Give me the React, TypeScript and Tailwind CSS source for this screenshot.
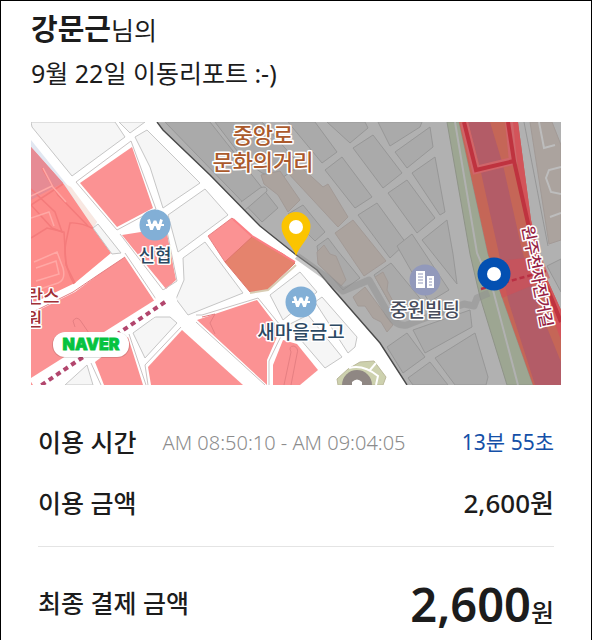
import type { ReactNode } from "react";

const FONT = "font-['Noto_Sans','Noto_Sans_CJK_KR',sans-serif]";

const SHADE = "M157 122 L163 130 L210 175 L260 226 L295 254 L317 270 L332 288 L380 343 L407 385 H561 V122 Z";
const SHADE_EDGE = "M157 122 L163 130 L210 175 L260 226 L295 254 L317 270 L332 288 L380 343 L407 385";

const LIGHT_BLOCKS = [
  "31,122 115,122 125,137 72,176 32,127",
  "119,122 130,133 145,122",
  "135,137 147,130 154,137 200,183 163,208 150,167",
  "205,189 228,215 178,252 168,215",
  "183,258 205,242 243,293 188,315 176,299 184,280",
  "133,333 155,317 170,317 177,323 145,358",
  "65,385 87,365 93,385",
  "270,295 300,272 317,292 283,320",
  "288,325 308,315 342,357 325,368",
  "315,302 322,297 357,337 355,347 348,353",
  "93,228 98,224 121,253 112,254",
];

const RED_BLOCKS = [
  "80,183 132,147 153,208 117,227",
  "122,235 166,228 176,280 166,289",
  "125,257 155,302 120,328 33,385 31,385 31,314 75,292 98,275",
  "95,362 128,337 143,385 104,385",
  "182,330 148,367 151,385 243,385",
  "197,320 257,300 280,330 267,360 267,385",
  "283,340 297,344 318,370 300,385 273,385 273,365",
];

const OUTLINES = [
  "76,182 131,141 156,209 117,230 76,182",
  "120,234 163,290 177,281 166,226",
  "125,253 158,302",
  "129,334 146,385",
  "91,363 101,385",
  "181,327 145,365 148,385",
  "196,315 202,315 258,298 284,330 269,361 269,385",
  "196,322 265,385",
];

const GREY_BLOCKS = [
  "165,122 210,122 278,208 262,222",
  "215,122 262,122 300,165 282,178 262,173 244,160",
  "288,122 315,122 337,152 322,163",
  "327,122 365,122 368,128 350,143",
  "353,148 373,135 402,173 383,188",
  "325,170 342,157 372,197 355,208",
  "358,215 377,203 406,243 390,258",
  "288,214 303,205 325,232 315,241",
  "317,246 328,238 337,250 360,278 343,290 320,264",
  "378,122 422,122 420,127 390,146",
  "395,152 430,127 433,147 407,168",
  "412,173 435,157 445,212 440,215",
  "388,193 407,180 435,218 417,233",
  "422,240 447,220 453,254 457,284",
  "397,246 412,234 449,290 429,302",
  "374,275 391,263 423,302 401,312 393,309",
  "413,330 470,310 472,327 425,353",
  "387,347 407,333 425,357 403,373",
  "435,358 475,333 488,377 486,385 455,385",
  "408,378 430,362 448,385 413,385",
];

const BROWN_BLOCKS = [
  "261,175 280,171 300,200 288,212 278,195 264,184",
  "287,172 302,168 323,187 328,184 348,217 338,227",
  "335,233 353,220 386,261 364,276",
  "317,252 324,245 330,254 336,256 346,280 341,286 318,264",
  "353,297 365,287 393,325 387,332 381,322 373,318 365,306 358,306",
  "375,277 383,272 388,282 387,290 396,307 391,305",
  "530,122 552,122 561,145 561,240 549,244",
];

function Label({
  x,
  y,
  size,
  color,
  children,
}: {
  x: number;
  y: number;
  size: number;
  color: string;
  children: ReactNode;
}) {
  return (
    <text
      x={x}
      y={y}
      fontSize={size}
      fill={color}
      stroke="#ffffff"
      strokeWidth="3"
      strokeLinejoin="round"
      paintOrder="stroke"
      textAnchor="middle"
      className="font-medium"
    >
      {children}
    </text>
  );
}

function BankMarker({ x, y }: { x: number; y: number }) {
  return (
    <g transform={`translate(${x} ${y})`}>
      <circle r="15.5" fill="#82afd6" />
      <path
        d="M-6.500 -5.500 L-3.500 4.500 L0 -4 L3.500 4.500 L6.500 -5.500"
        fill="none"
        stroke="#fff"
        strokeWidth="2.8"
        strokeLinejoin="bevel"
      />
      <path d="M-9 0 H9" stroke="#fff" strokeWidth="2" />
    </g>
  );
}

function RouteMap() {
  return (
    <svg viewBox="31 122 530 263" className="block w-full" role="img" aria-label="이동 경로 지도">
      <rect x="31" y="122" width="530" height="263" fill="#ffffff" />

      {/* west side of the main road */}
      <polygon points="31,140 97,222 93,228 31,147" fill="#e1e7f1" />
      <polygon points="64,183 71,187 97,222 93,228" fill="#f8e7e1" />
      <polygon points="31,147 63,183 93,227 111,253 75,283 31,304" fill="#fd8c8a" />
      <polygon points="31,147 63,183 40,195 31,200" fill="#e68b94" />
      <g fill="none" stroke="#f47b7b" strokeWidth="1.5">
        <path d="M31 205 L63 184 M31 189 L55 212 L62 232 L52 228 L31 205 M42 168 L58 195 L88 226" />
        <path d="M31 238 L47 228 L64 232 L66 265 L75 283" />
        <path d="M74 284 Q62 262 66 242 L70 223 Q80 222 94 229" />
      </g>
      <g fill="none" stroke="#ffa8a5" strokeWidth="1.5">
        <path d="M31 196 L52 186 L66 202 M43 168 L53 187 M31 218 L49 212 L54 226" />
        <path d="M34 262 L57 252 L63 268 Q66 280 58 283 L31 292 M36 268 L56 261 L59 274 L36 281" />
      </g>
      {LIGHT_BLOCKS.map((p) => (
        <polygon key={p} points={p} fill="#f6f6f6" stroke="#c6c6c6" />
      ))}
      {RED_BLOCKS.map((p) => (
        <polygon key={p} points={p} fill="#fb9293" />
      ))}
      {OUTLINES.map((p) => (
        <polyline key={p} points={p} fill="none" stroke="#c9c3c3" />
      ))}
      <g fill="none" stroke="#e57f82">
        <path d="M31 313 L73 292 L98 275 L125 257" />
        <path d="M75 327 L73 321 Q76 316 80 320 L91 336" />
        <path d="M202 317 L215 314 L210 323 L215 334" />
        <path d="M284 385 L291 352 Q288 346 294 346 Q299 348 297 354 L291 385" />
      </g>
      <polygon points="208,236 232,218 252,237 225,262" fill="#fb9293" stroke="#e88083" />
      <polygon points="252,237 283,254 295,263 267,290 250,292 225,262" fill="#e5836d" stroke="#e0756b" />
      <path d="M233 219 L252 236 L295 262" fill="none" stroke="#fb7f84" strokeWidth="2" />
      <path d="M296 265 L268 290 L250 293" fill="none" stroke="#d8cdb4" strokeWidth="2" />
      <path d="M165 302 L33 385" stroke="#ffffff" strokeWidth="14" />
      <circle cx="166" cy="301" r="11" fill="#ffffff" />
      <path d="M165 302 L40 386" stroke="#b2466d" strokeWidth="4" strokeDasharray="5 4" />
      <path d="M337 379 L348 369 L360 362 L374 361 L386 377 L383 385 L338 385 Z" fill="#cdd1ae" stroke="#bbb99b" />
      <path d="M349 368 Q363 364 378 376 L376 385 M370 370 L376 363" fill="none" stroke="#fff" strokeWidth="2" />

      {/* shaded side of the main road */}
      <path d={SHADE} fill="#b1b1b1" />
      <clipPath id="shade">
        <path d={SHADE} />
      </clipPath>
      <g clipPath="url(#shade)">
        {GREY_BLOCKS.map((p) => (
          <polygon key={p} points={p} fill="#aaaaaa" stroke="#979797" />
        ))}
        {BROWN_BLOCKS.map((p) => (
          <polygon key={p} points={p} fill="#aba39e" stroke="#a29a96" />
        ))}
        <path d="M241 202 L260 188 Q267 185 267 191 L244 211" fill="#b1b1b1" stroke="#979797" />
        <path
          d="M539 122 L544 148 L555 145 M561 167 L549 170 L546 178 L551 192 L561 194 M550 217 L561 213"
          fill="none"
          stroke="#bdbdbd"
          strokeWidth="2"
        />
        <path d="M524 122 L548 246" fill="none" stroke="#979797" />
        <path d="M547 266 L561 259 V292 Z" fill="#aaaaaa" stroke="#979797" />
      </g>
      <path d={SHADE_EDGE} fill="none" stroke="#4a4a4a" strokeWidth="1.4" />

      {/* river and banks */}
      <polygon points="447,122 459,122 488,254 503,300 533,385 507,385 480,297 470,254" fill="#9da692" stroke="#8f9488" />
      <path d="M455 122 L477 253 L493 290 L518 385" fill="none" stroke="#b1b1b1" strokeWidth="2" />
      <polygon points="459,122 518,122 531,220 543,270 561,310 561,385 533,385 503,300 488,254" fill="#c56657" />
      <polygon
        points="468,122 490,122 503,165 522,250 537,303 561,362 561,385 535,385 508,300 499,254 480,168"
        fill="#b35c67"
      />
      <polygon points="511,122 518,122 531,220 543,270 561,310 561,340 545,297 528,230" fill="#d3545a" />
      <path d="M490 262 L541 256 L550 278 L502 298 Z" fill="#d14f57" opacity="0.6" />
      <path d="M464 122 L476 170 L513 161 L509 122" fill="none" stroke="#d0656a" strokeWidth="8" />
      <path
        d="M464 122 L476 170 L514 161 L508 122 M514 161 L528 223 L544 280 L561 322"
        fill="none"
        stroke="#bf333f"
        strokeWidth="4"
      />
      <path d="M481 289 L546 271" stroke="#b92f43" strokeWidth="2.500" strokeDasharray="5 3" />

      {/* travelled route */}
      <path
        d="M297 256 L325 276 L343 291 L369 280 L389 315 Q397 327 407 325 L417 321 L464 304 L474 306 L477 298 L489 293"
        fill="none"
        stroke="#8f8f8f"
        strokeOpacity="0.5"
        strokeWidth="7"
        strokeLinejoin="round"
      />

      <BankMarker x={155} y={225} />
      <BankMarker x={301} y={302} />
      <g>
        <circle cx="425" cy="280" r="15.5" fill="#9299bb" />
        <path d="M416 271 H425 V288 H416 Z M427 276 H434 V288 H427 Z" fill="#fff" />
        <path
          d="M418 274 H423 M418 277 H423 M418 280 H423 M418 283 H423 M429 279 H432 M429 282 H432 M429 285 H432"
          stroke="#9299bb"
        />
      </g>
      <g>
        <path d="M342 385 A15 15 0 0 1 372 385 Z" fill="#8f8783" />
        <path d="M352 385 V382 Q357 377 362 382 V385 Z" fill="#fff" />
      </g>

      <Label x={263} y={143} size={22} color="#ab5a2c">중앙로</Label>
      <Label x={263} y={170} size={22} color="#ab5a2c">문화의거리</Label>
      <Label x={155} y={262} size={18} color="#2c4963">신협</Label>
      <Label x={301} y={339} size={19} color="#2c4963">새마을금고</Label>
      <Label x={425} y={317} size={19} color="#474c5c">중원빌딩</Label>
      <Label x={43} y={303} size={18} color="#a12f36">란스</Label>
      <Label x={34} y={326} size={18} color="#a12f36">원</Label>
      <text
        transform="translate(522 227) rotate(79)"
        fontSize="16"
        fill="#971f45"
        stroke="#ffffff"
        strokeWidth="3"
        strokeLinejoin="round"
        paintOrder="stroke"
        className="font-medium"
      >
        원주천자전거길
      </text>

      <path
        d="M296 256 C293 246 281.500 238 281.500 226.500 A14.500 14.500 0 0 1 310.500 226.500 C310.500 238 299 246 296 256 Z"
        fill="#fbc400"
      />
      <circle cx="296" cy="227" r="7" fill="#fff" />
      <circle cx="494" cy="274" r="16.500" fill="#0350b2" />
      <circle cx="494" cy="274" r="7" fill="#fff" />

      <rect x="52" y="332" width="78" height="26" rx="13" fill="#000" opacity="0.12" />
      <rect x="53" y="332" width="76" height="25" rx="12" fill="#fff" />
      <text
        x="91"
        y="350"
        fontSize="16"
        fill="#06c33f"
        stroke="#06c33f"
        strokeWidth="0.8"
        textAnchor="middle"
        className="font-['Inter',sans-serif] font-black"
      >
        NAVER
      </text>
    </svg>
  );
}

export default function App() {
  return (
    <main className={`min-h-screen border border-black bg-white px-[30px] pb-2 text-[#1c1c1c] ${FONT}`}>
      <header className="pt-[6px]">
        <h1 className="text-[25px] leading-[44px]">
          <strong className="text-[29px] font-bold">강문근</strong>님의
        </h1>
        <p className="text-[25px] leading-[42px]">9월 22일 이동리포트 :-)</p>
      </header>

      <div className="mt-7">
        <RouteMap />
      </div>

      <dl className="px-[7px] pt-[27px]">
        <div className="flex h-[61px] items-center text-[25px]">
          <dt className="font-medium">이용 시간</dt>
          <dd className="ml-[26px] text-[20px] font-light text-[#8c8c8c]">AM 08:50:10 - AM 09:04:05</dd>
          <dd className="ml-auto text-[21px] text-[#1450a8]">13분 55초</dd>
        </div>
        <div className="flex h-[61px] items-center justify-between text-[25px] font-medium">
          <dt>이용 금액</dt>
          <dd className="text-[26px]">2,600원</dd>
        </div>
        <div className="mt-3 flex items-center justify-between border-t border-[#e4e4e4] pt-[27px] text-[25px] font-medium">
          <dt>최종 결제 금액</dt>
          <dd>
            <span className="text-[47px] leading-[60px] font-semibold">2,600</span>원
          </dd>
        </div>
      </dl>
    </main>
  );
}
